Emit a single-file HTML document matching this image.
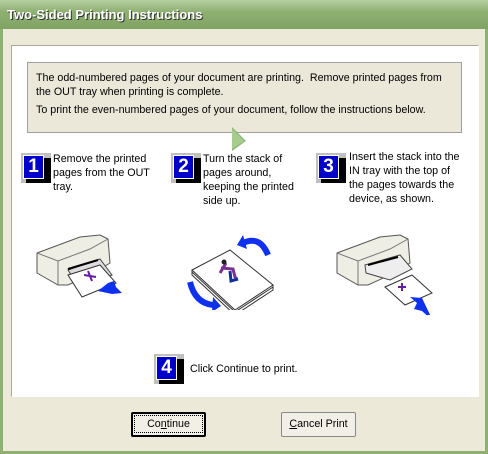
<!DOCTYPE html>
<html><head><style>
body{margin:0;width:488px;height:454px;overflow:hidden;font-family:"Liberation Sans",sans-serif;}
.win{position:absolute;left:0;top:0;width:488px;height:454px;background:#8fb073;}
.title{position:absolute;left:0;top:0;width:488px;height:29px;background:linear-gradient(#b5cfa0,#8fb073 40%,#7fa363);color:#fff;font-weight:bold;font-size:13px;}
.title span{position:absolute;left:7px;top:7px;text-shadow:1px 1px 0 #333;}
.body{position:absolute;left:3px;top:29px;width:482px;height:422px;background:#ece9d8;}
.panel{position:absolute;left:11px;top:45px;width:466px;height:350px;background:#fff;border:1px solid #aca899;border-right-color:#fff;border-bottom-color:#fff;}
.call{position:absolute;left:27px;top:62px;width:433px;height:69px;background:#ebe8da;border:1px solid #a0a0a0;font-size:10.7px;color:#000;}
.call p{margin:0;position:absolute;left:8px;}
.num{position:absolute;width:30px;height:30px;}
.num .sh{position:absolute;left:0;top:0;width:30px;height:30px;background:#c0c0c0;}
.num .bk{position:absolute;left:5px;top:5px;width:25px;height:25px;background:#000;}
.num .bl{position:absolute;left:2px;top:2px;width:19px;height:22px;background:#0000c8;border:1px solid #fff;color:#fff;font-weight:bold;font-size:19px;text-align:center;line-height:22px;}
.txt{position:absolute;font-size:10.7px;line-height:14px;color:#000;}
.btn{position:absolute;top:412px;width:73px;height:23px;background:#f2f0e6;border:1px solid #888;border-radius:2px;font-size:10.7px;text-align:center;line-height:23px;}
</style></head><body>
<div class="win">
<div class="title"><span>Two-Sided Printing Instructions</span></div>
<div class="body"></div>
<div class="panel"></div>
<div class="call">
<p style="top:9px">The odd-numbered pages of your document are printing.&nbsp; Remove printed pages from</p>
<p style="top:23px">the OUT tray when printing is complete.</p>
<p style="top:41px">To print the even-numbered pages of your document, follow the instructions below.</p>
</div>
<svg style="position:absolute;left:228px;top:127px" width="20" height="26"><polygon points="4,0 4,24 18,14" fill="#8fb87a"/><polygon points="4,2 4,22 16,14" fill="#a8cc90"/></svg>

<div class="num" style="left:21px;top:153px"><div class="sh"></div><div class="bk"></div><div class="bl">1</div></div>
<div class="txt" style="left:53px;top:152px">Remove the printed<br>pages from the OUT<br>tray.</div>
<div class="num" style="left:171px;top:153px"><div class="sh"></div><div class="bk"></div><div class="bl">2</div></div>
<div class="txt" style="left:203px;top:152px">Turn the stack of<br>pages around,<br>keeping the printed<br>side up.</div>
<div class="num" style="left:316px;top:153px"><div class="sh"></div><div class="bk"></div><div class="bl">3</div></div>
<div class="txt" style="left:349px;top:150px">Insert the stack into the<br>IN tray with the top of<br>the pages towards the<br>device, as shown.</div>

<svg style="position:absolute;left:30px;top:225px" width="100" height="80">
<path d="M7,28 L50,12 L70,10 L78,14 L80,38 L60,50 L38,60 L28,60 L7,48 Z" fill="#eeeee4" stroke="#555"/>
<path d="M7,28 L28,36 L60,24 L78,14" fill="none" stroke="#777"/>
<path d="M28,36 L28,60" stroke="#777"/>
<path d="M38,45 L70,34 L82,50 L50,64 Z" fill="#ddd" stroke="#444"/>
<path d="M38,50 L70,40 L86,58 L52,72 Z" fill="#fff" stroke="#333"/>
<path d="M38,44 L68,35" stroke="#000" stroke-width="2"/>
<path d="M58,46 L62,56 M54,50 L66,52" stroke="#6020a0" stroke-width="2"/>
<path d="M68,66 L78,58 L84,56 L86,62 L92,68 L82,69 Z" fill="#1030f0"/>
</svg>

<svg style="position:absolute;left:185px;top:225px" width="90" height="85">
<path d="M7,45 L45,25 L88,60 L50,85 Z" fill="#fff" stroke="#333"/>
<path d="M7,45 L7,50 L50,90 L88,65 L88,60" fill="none" stroke="#333"/>
<path d="M7,47 L50,87 L88,62" fill="none" stroke="#333"/>
<path d="M41,38 L35,48 M36,43 L48,44 L50,52 L52,54" stroke="#7a3090" stroke-width="3" fill="none"/>
<path d="M45,46 L46,56 L53,54" stroke="#1030a0" stroke-width="3" fill="none"/>
<circle cx="39" cy="37" r="2.5" fill="#222"/>
<path d="M58,18 Q75,10 83,30" stroke="#1030f0" stroke-width="6" fill="none"/><polygon points="58,10 52,20 62,24" fill="#1030f0"/>
<path d="M5,57 Q10,78 28,80" stroke="#1030f0" stroke-width="6" fill="none"/><polygon points="28,72 36,81 27,87" fill="#1030f0"/>
</svg>

<svg style="position:absolute;left:330px;top:225px" width="110" height="90">
<path d="M7,28 L50,12 L70,10 L78,14 L80,38 L60,50 L38,60 L28,60 L7,48 Z" fill="#eeeee4" stroke="#555"/>
<path d="M7,28 L28,36 L60,24 L78,14" fill="none" stroke="#777"/>
<path d="M28,36 L28,60" stroke="#777"/>
<path d="M36,48 L35,40 L70,30 L82,44 L60,55 Z" fill="#eee" stroke="#444"/>
<path d="M38,40 L68,32" stroke="#000" stroke-width="2"/>
<path d="M55,62 L82,50 L102,68 L75,80 Z" fill="#fff" stroke="#333"/>
<path d="M72,58 L72,66 M68,62 L76,62" stroke="#6020a0" stroke-width="2"/>
<path d="M103,96 L92,86 L84,84 L87,78 L80,72 L92,73 Z" fill="#1030f0"/>
</svg>

<div class="num" style="left:154px;top:354px"><div class="sh"></div><div class="bk"></div><div class="bl">4</div></div>
<div class="txt" style="left:190px;top:362px">Click Continue to print.</div>

<div class="btn" style="left:131px;border:2px solid #000;width:71px;height:21px;line-height:21px"><span style="border:1px dotted #000;padding:2px 12px">Co<u>n</u>tinue</span></div>
<div class="btn" style="left:281px"><u>C</u>ancel Print</div>
</div>
</body></html>
